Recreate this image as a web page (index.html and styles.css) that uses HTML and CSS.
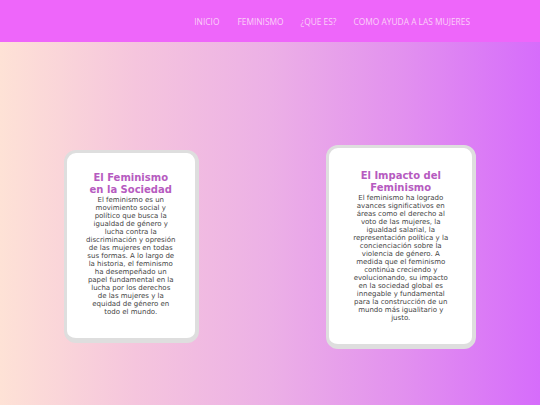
FILE: index.html
```html
<!DOCTYPE html>
<html lang="es">
<head>
<meta charset="utf-8">
<title>Feminismo</title>
<link rel="stylesheet" href="styles.css">
</head>
<body>
<header class="topbar">
  <nav class="nav">
    <a href="#" class="nav-link">INICIO</a>
    <a href="#" class="nav-link">FEMINISMO</a>
    <a href="#" class="nav-link">¿QUE ES?</a>
    <a href="#" class="nav-link">COMO AYUDA A LAS MUJERES</a>
  </nav>
</header>
<main class="main">
  <section class="card card-one">
    <h2 class="card-title">El Feminismo en la Sociedad</h2>
    <p class="card-text">El feminismo es un movimiento social y político que busca la igualdad de género y lucha contra la discriminación y opresión de las mujeres en todas sus formas. A lo largo de la historia, el feminismo ha desempeñado un papel fundamental en la lucha por los derechos de las mujeres y la equidad de género en todo el mundo.</p>
  </section>
  <section class="card card-two">
    <h2 class="card-title">El Impacto del Feminismo</h2>
    <p class="card-text">El feminismo ha logrado avances significativos en áreas como el derecho al voto de las mujeres, la igualdad salarial, la representación política y la concienciación sobre la violencia de género. A medida que el feminismo continúa creciendo y evolucionando, su impacto en la sociedad global es innegable y fundamental para la construcción de un mundo más igualitario y justo.</p>
  </section>
</main>
</body>
</html>
```

FILE: styles.css
```css
html, body {
  margin: 0;
  padding: 0;
}
body {
  width: 540px;
  height: 405px;
  overflow: hidden;
  background: linear-gradient(to right, #fee2d6 0%, #f5c5dd 25%, #ecb0e6 50%, #e290ef 75%, #d66cfb 100%);
  font-family: "DejaVu Sans", Verdana, sans-serif;
}
.topbar {
  height: 42px;
  background: #ee66fa;
  display: flex;
  align-items: center;
  justify-content: flex-end;
  padding-right: 70px;
}
.nav {
  display: flex;
  gap: 17px;
}
.nav-link {
  font-family: "Open Sans", "Liberation Sans", sans-serif;
  font-size: 8.4px;
  color: #fbd0f8;
  text-decoration: none;
}
.nav-link:first-child {
  margin-right: 1px;
}
.main {
  box-sizing: border-box;
  height: 363px;
  padding-top: 46px;
  display: flex;
  justify-content: space-around;
  align-items: center;
}
.card {
  box-sizing: border-box;
  background: #fff;
  border: 3px solid #dedede;
  border-right-width: 4px;
  border-bottom-width: 5px;
  border-radius: 12px;
  text-align: center;
}
.card-one {
  width: 135px;
  padding: 19px 19px 22px;
}
.card-two {
  width: 150px;
  padding: 22px 20px 22px;
}
.card-title {
  margin: 0;
  font-size: 10px;
  line-height: 12px;
  font-weight: bold;
  color: #b65bc0;
}
.card-text {
  margin: 0;
  font-size: 7px;
  line-height: 8px;
  color: #444;
}
```
